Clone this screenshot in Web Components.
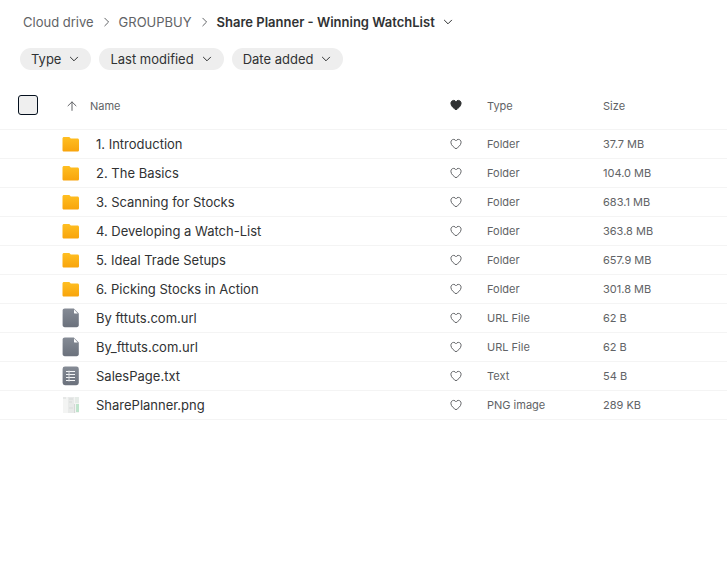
<!DOCTYPE html>
<html lang="en">
<head>
<meta charset="utf-8">
<title>Share Planner - Winning WatchList</title>
<style>
body {
    margin: 0;
    background-color: #fff;
    color: #303233;
    font-family: Inter, "Liberation Sans", sans-serif;
    font-size: 13px;
    line-height: 20px;
}
</style>
</head>
<body>

<drive-page>
    <path-bar slot="path">
        <path-crumb data-href="#drive">Cloud drive</path-crumb>
        <path-crumb data-href="#groupbuy">GROUPBUY</path-crumb>
        <path-current>Share Planner - Winning WatchList</path-current>
    </path-bar>
    <filter-chip slot="filters">Type</filter-chip>
    <filter-chip slot="filters">Last modified</filter-chip>
    <filter-chip slot="filters">Date added</filter-chip>
    <file-list></file-list>
</drive-page>

<script>
const icons = {
    down: `<svg width="10" height="10" viewBox="0 0 10 10" fill="none" stroke="currentColor" stroke-width="1" stroke-linecap="round" stroke-linejoin="round"><path d="M1.4 3.2 5 6.8l3.6-3.6"/></svg>`,
    right: `<svg width="9" height="10" viewBox="0 0 9 10" fill="none" stroke="currentColor" stroke-width="1" stroke-linecap="round" stroke-linejoin="round"><path d="M2.8 1.2 6.6 5 2.8 8.8"/></svg>`,
    up: `<svg width="10" height="10" viewBox="0 0 10 10" fill="none" stroke="currentColor" stroke-width="1" stroke-linecap="round" stroke-linejoin="round"><path d="M5 9.4V1M1 4.8 5 .9l4 3.9"/></svg>`,
    heart: `<svg width="12" height="12" viewBox="0 0 12 12" fill="none" stroke="currentColor" stroke-width="1" stroke-linejoin="round"><path d="M6 10.8C4.2 9.5.9 7.4.9 4.3c0-1.7 1.2-2.9 2.7-2.9 1 0 1.9.5 2.4 1.4.5-.9 1.4-1.4 2.4-1.4 1.5 0 2.7 1.2 2.7 2.9 0 3.1-3.3 5.2-5.1 6.5z"/></svg>`,
    folder: `<svg width="18" height="20" viewBox="0 0 18 20"><defs><linearGradient id="g" x1="0" y1="0" x2="0" y2="1"><stop stop-color="#ffbf22"/><stop offset="1" stop-color="#f8a40c"/></linearGradient></defs><path d="M.5 4.6C.5 3.6 1.1 3 2.1 3h4.6c.5 0 .8.1 1.1.5l.7.8c.2.2.5.3.8.3h6.1c1 0 1.6.6 1.6 1.6v9.7c0 1-.6 1.6-1.6 1.6H2.1c-1 0-1.6-.6-1.6-1.6z" fill="url(#g)"/></svg>`,
    generic: `<svg width="18" height="20" viewBox="0 0 18 20"><defs><linearGradient id="g" x1="0" y1="0" x2="0" y2="1"><stop stop-color="#858b95"/><stop offset="1" stop-color="#6b717c"/></linearGradient></defs><path d="M2.8.6h9L16.8 5.6V17c0 1.4-.8 2.2-2.2 2.2H2.8C1.4 19.2.6 18.4.6 17V2.8C.6 1.4 1.4.6 2.8.6z" fill="url(#g)"/><path d="M12 1.6 15.8 5.6H13.2C12.4 5.6 12 5.2 12 4.4z" fill="#fff"/></svg>`,
    text: `<svg width="18" height="20" viewBox="0 0 18 20"><defs><linearGradient id="g" x1="0" y1="0" x2="0" y2="1"><stop stop-color="#858b95"/><stop offset="1" stop-color="#6b717c"/></linearGradient></defs><rect x=".6" y=".6" width="16.2" height="18.6" rx="2.4" fill="url(#g)"/><path d="M4 5.5h9M4 8.5h9M4 11.5h9M4 14.5h9" stroke="#f4f5f6"/><path d="M7 4.5v11" stroke="#d5d8dc"/></svg>`,
    image: `<svg width="18" height="20" viewBox="0 0 18 20"><path d="M1 2h16v16H1z" fill="#f3f4f3"/><path d="M6 2h6v16H6z" fill="#e8eae9"/><path d="M1 3h3M7 4h4M7 7h3M7 13h4" stroke="#d8dbda"/><path d="M12 9h1v9h-1z" fill="#d6d8d7"/><path d="M13 2h4v6h-4z" fill="#e5ebe7"/><path d="M14 9h3v8h-3z" fill="#bfe4cc"/></svg>`
};

const files = [
    ["folder", "1. Introduction", "Folder", "37.7 MB"],
    ["folder", "2. The Basics", "Folder", "104.0 MB"],
    ["folder", "3. Scanning for Stocks", "Folder", "683.1 MB"],
    ["folder", "4. Developing a Watch-List", "Folder", "363.8 MB"],
    ["folder", "5. Ideal Trade Setups", "Folder", "657.9 MB"],
    ["folder", "6. Picking Stocks in Action", "Folder", "301.8 MB"],
    ["generic", "By fttuts.com.url", "URL File", "62 B"],
    ["generic", "By_fttuts.com.url", "URL File", "62 B"],
    ["text", "SalesPage.txt", "Text", "54 B"],
    ["image", "SharePlanner.png", "PNG image", "289 KB"]
];

class DrivePage extends HTMLElement
{
    constructor()
    {
        super();
        this.attachShadow({ mode: "open" }).innerHTML = `
<style>
:host {
    display: block;
    padding-top: 12px;
}
.filters {
    display: flex;
    flex-wrap: wrap;
    gap: 8px;
    padding: 16px 20px 10px;
}
</style>
<header>
    <slot name="path"></slot>
    <div class="filters"><slot name="filters"></slot></div>
</header>
<main><slot></slot></main>
`;
    }
}

class PathBar extends HTMLElement
{
    constructor()
    {
        super();
        this.attachShadow({ mode: "open" }).innerHTML = `
<style>
:host {
    display: block;
}
nav {
    display: flex;
    flex-wrap: wrap;
    padding: 0 23px;
}
</style>
<nav aria-label="Path"><slot></slot></nav>
`;
    }
}

class PathCrumb extends HTMLElement
{
    constructor()
    {
        super();
        this.attachShadow({ mode: "open" }).innerHTML = `
<style>
:host {
    display: flex;
    align-items: center;
    color: #616366;
}
a {
    color: inherit;
    text-decoration: none;
}
svg {
    margin: 0 8px;
}
</style>
<a><slot></slot></a>${icons.right}
`;
        this.link = this.shadowRoot.querySelector("a");
    }

    connectedCallback()
    {
        this.link.href = this.getAttribute("data-href");
    }
}

class PathCurrent extends HTMLElement
{
    constructor()
    {
        super();
        this.attachShadow({ mode: "open" }).innerHTML = `
<style>
:host {
    display: block;
}
button {
    display: flex;
    align-items: center;
    gap: 8px;
    padding: 0;
    border: 0;
    background: none;
    color: inherit;
    font: inherit;
    font-weight: 600;
}
</style>
<button type="button"><slot></slot>${icons.down}</button>
`;
    }
}

class FilterChip extends HTMLElement
{
    constructor()
    {
        super();
        this.attachShadow({ mode: "open" }).innerHTML = `
<style>
:host {
    display: block;
}
button {
    display: flex;
    align-items: center;
    gap: 8px;
    height: 22px;
    padding: 0 12px 0 11px;
    border: 0;
    border-radius: 11px;
    background-color: #eee;
    color: inherit;
    font: inherit;
}
</style>
<button type="button"><slot></slot>${icons.down}</button>
`;
    }
}

class FileIcon extends HTMLElement
{
    constructor()
    {
        super();
        this.attachShadow({ mode: "open" });
    }

    connectedCallback()
    {
        this.shadowRoot.innerHTML = `
<style>
:host {
    display: block;
    height: 20px;
}
svg {
    display: block;
}
</style>
${icons[this.getAttribute("data-kind")]}
`;
    }
}

class HeartButton extends HTMLElement
{
    constructor()
    {
        super();
        this.attachShadow({ mode: "open" }).innerHTML = `
<style>
:host {
    display: block;
}
button {
    display: block;
    margin: 0 auto;
    padding: 0;
    border: 0;
    background: none;
    color: #616366;
}
svg {
    display: block;
}
:host([data-filled]) button {
    color: #303233;
}
:host([data-filled]) svg {
    fill: currentColor;
}
</style>
<button type="button" aria-label="Favourite">${icons.heart}</button>
`;
    }
}

class FileList extends HTMLElement
{
    constructor()
    {
        super();
        this.attachShadow({ mode: "open" });
    }

    connectedCallback()
    {
        this.render();
    }

    render()
    {
        const rows = files.map(([kind, name, type, size]) => `
        <tr>
            <td></td>
            <td><div class="name"><file-icon data-kind="${kind}"></file-icon>${name}</div></td>
            <td><heart-button></heart-button></td>
            <td class="meta">${type}</td>
            <td class="meta">${size}</td>
        </tr>`).join("");

        this.shadowRoot.innerHTML = `
<style>
:host {
    display: block;
}
table {
    width: 100%;
    table-layout: fixed;
    border-collapse: separate;
    border-spacing: 0;
}
th, td {
    box-sizing: border-box;
    height: 29px;
    padding: 0;
    border-bottom: 1px solid #f4f4f4;
    text-align: left;
    font-weight: 400;
    vertical-align: middle;
}
th {
    height: 50px;
    color: #616366;
    font-size: 11px;
}
.check { width: 62px; }
.fav { width: 40px; }
.type { width: 127px; }
.size { width: 124px; }
.sort, .type, .size {
    padding-top: 3px;
}
.type, .meta:nth-child(4) {
    padding-left: 11px;
}
.meta {
    color: #616366;
    font-size: 11px;
}
.name {
    display: flex;
    align-items: center;
    gap: 16px;
    white-space: nowrap;
}
input {
    appearance: none;
    display: block;
    box-sizing: border-box;
    width: 20px;
    height: 20px;
    margin: 0 0 0 18px;
    border: 1px solid #04101e;
    border-radius: 3px;
    background-color: #efefef;
}
th button {
    display: flex;
    align-items: center;
    gap: 13px;
    padding: 0 0 0 5px;
    border: 0;
    background: none;
    color: inherit;
    font: inherit;
}
</style>
<table>
    <thead>
        <tr>
            <th class="check"><input type="checkbox" aria-label="Select all"></th>
            <th class="sort"><button type="button">${icons.up}Name</button></th>
            <th class="fav"><heart-button data-filled></heart-button></th>
            <th class="type">Type</th>
            <th class="size">Size</th>
        </tr>
    </thead>
    <tbody>${rows}
    </tbody>
</table>
`;
    }
}

customElements.define("drive-page", DrivePage);
customElements.define("path-bar", PathBar);
customElements.define("path-crumb", PathCrumb);
customElements.define("path-current", PathCurrent);
customElements.define("filter-chip", FilterChip);
customElements.define("file-icon", FileIcon);
customElements.define("heart-button", HeartButton);
customElements.define("file-list", FileList);
</script>
</body>
</html>
